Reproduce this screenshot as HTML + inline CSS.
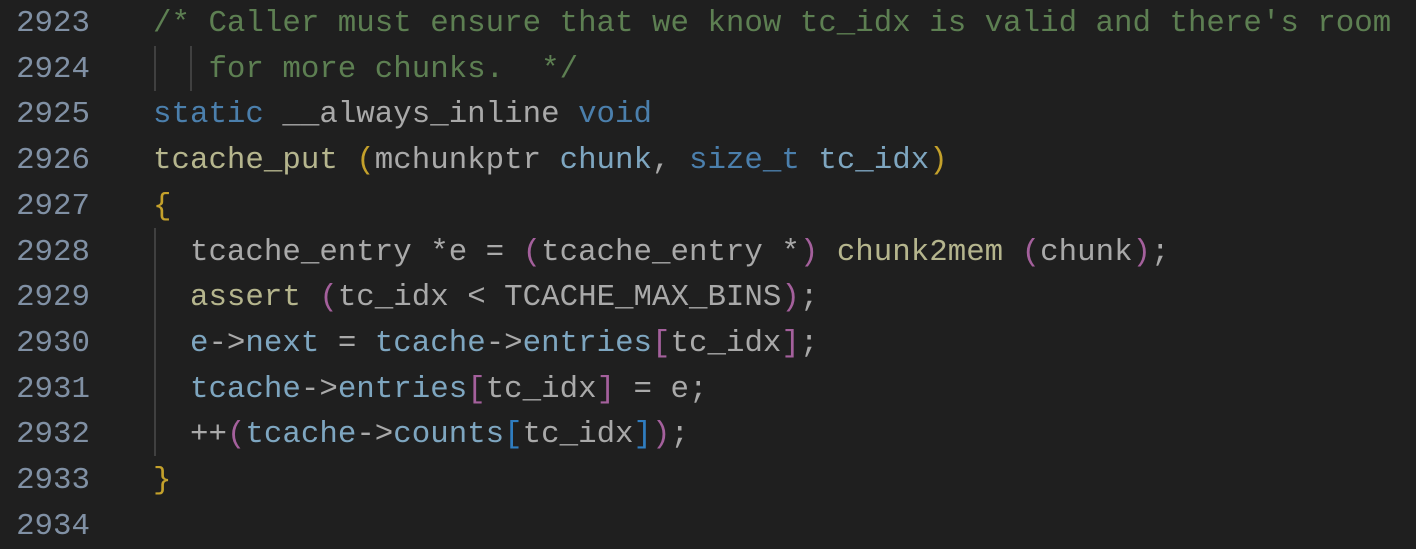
<!DOCTYPE html>
<html><head><style>
html,body{margin:0;padding:0;background:#1f1f1f;width:1416px;height:515px;overflow:hidden}
.l{position:absolute;left:0;height:45.7px;line-height:45.7px;font-family:"Liberation Mono",monospace;font-size:30.8px;white-space:pre;color:#a9a9a9}
.n{position:absolute;left:16px;width:74px;text-align:right;color:#8090a4}
.c{position:absolute;left:153px}
.cm{color:#5d7f52}.kw{color:#4b7fac}.fn{color:#b5b58d}.v{color:#7ea6c0}.y{color:#c4a12b}.p{color:#a4609c}.b{color:#2f7dc0}
.g{position:absolute;width:2px;background:#404040}
</style></head><body>
<div class="l" style="top:1px"><span class="n">2923</span><span class="c"><span class="cm">/* Caller must ensure that we know tc_idx is valid and there's room</span></span></div>
<div class="l" style="top:46.7px"><span class="n">2924</span><span class="c"><span class="cm">   for more chunks.  */</span></span></div>
<div class="l" style="top:92.4px"><span class="n">2925</span><span class="c"><span class="kw">static</span> __always_inline <span class="kw">void</span></span></div>
<div class="l" style="top:138.1px"><span class="n">2926</span><span class="c"><span class="fn">tcache_put</span> <span class="y">(</span>mchunkptr <span class="v">chunk</span>, <span class="kw">size_t</span> <span class="v">tc_idx</span><span class="y">)</span></span></div>
<div class="l" style="top:183.8px"><span class="n">2927</span><span class="c"><span class="y">{</span></span></div>
<div class="l" style="top:229.5px"><span class="n">2928</span><span class="c">  tcache_entry *e = <span class="p">(</span>tcache_entry *<span class="p">)</span> <span class="fn">chunk2mem</span> <span class="p">(</span>chunk<span class="p">)</span>;</span></div>
<div class="l" style="top:275.2px"><span class="n">2929</span><span class="c">  <span class="fn">assert</span> <span class="p">(</span>tc_idx &lt; TCACHE_MAX_BINS<span class="p">)</span>;</span></div>
<div class="l" style="top:320.9px"><span class="n">2930</span><span class="c">  <span class="v">e</span>-&gt;<span class="v">next</span> = <span class="v">tcache</span>-&gt;<span class="v">entries</span><span class="p">[</span>tc_idx<span class="p">]</span>;</span></div>
<div class="l" style="top:366.6px"><span class="n">2931</span><span class="c">  <span class="v">tcache</span>-&gt;<span class="v">entries</span><span class="p">[</span>tc_idx<span class="p">]</span> = e;</span></div>
<div class="l" style="top:412.3px"><span class="n">2932</span><span class="c">  ++<span class="p">(</span><span class="v">tcache</span>-&gt;<span class="v">counts</span><span class="b">[</span>tc_idx<span class="b">]</span><span class="p">)</span>;</span></div>
<div class="l" style="top:458px"><span class="n">2933</span><span class="c"><span class="y">}</span></span></div>
<div class="l" style="top:503.7px"><span class="n">2934</span></div>
<div class="g" style="left:154px;top:46px;height:45px"></div>
<div class="g" style="left:190px;top:46px;height:45px"></div>
<div class="g" style="left:154px;top:228px;height:228px"></div>
</body></html>
